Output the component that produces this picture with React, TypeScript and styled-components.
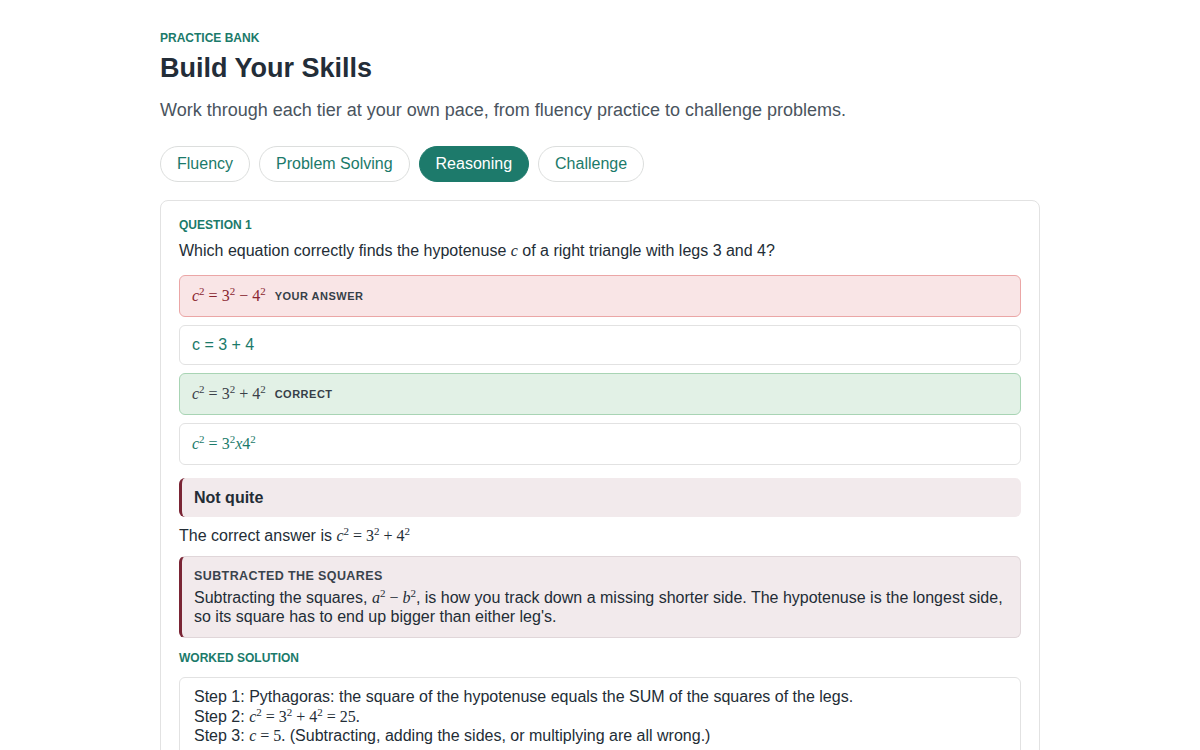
import styled, { createGlobalStyle } from "styled-components";

const GlobalStyle = createGlobalStyle`
  body {
    margin: 0;
    background: #ffffff;
    font-family: "Liberation Sans", Arial, sans-serif;
    color: #232d36;
  }
`;

const teal = "#1b7a6a";

export default function App() {
  const tiers = ["Fluency", "Problem Solving", "Reasoning", "Challenge"];

  return (
    <>
      <GlobalStyle />
      <Page>
        <Eyebrow>Practice Bank</Eyebrow>
        <Title>Build Your Skills</Title>
        <Subtitle>
          Work through each tier at your own pace, from fluency practice to challenge problems.
        </Subtitle>

        <Tabs>
          {tiers.map((t) => (
            <Pill key={t} $active={t === "Reasoning"}>
              {t}
            </Pill>
          ))}
        </Tabs>

        <Card>
          <SectionLabel>Question 1</SectionLabel>
          <Question>
            Which equation correctly finds the hypotenuse <Math><V>c</V></Math> of a right
            triangle with legs 3 and 4?
          </Question>

          <Options>
            <Option $state="wrong">
              <Math>
                <V>c</V><Sup>2</Sup> = 3<Sup>2</Sup> − 4<Sup>2</Sup>
              </Math>
              <Tag>Your answer</Tag>
            </Option>
            <Option>c = 3 + 4</Option>
            <Option $state="correct">
              <Math>
                <V>c</V><Sup>2</Sup> = 3<Sup>2</Sup> + 4<Sup>2</Sup>
              </Math>
              <Tag>Correct</Tag>
            </Option>
            <Option>
              <Math>
                <V>c</V><Sup>2</Sup> = 3<Sup>2</Sup><V>x</V>4<Sup>2</Sup>
              </Math>
            </Option>
          </Options>

          <Verdict>Not quite</Verdict>
          <Answer>
            The correct answer is{" "}
            <Math>
              <V>c</V><Sup>2</Sup> = 3<Sup>2</Sup> + 4<Sup>2</Sup>
            </Math>
          </Answer>

          <Misconception>
            <MisTitle>Subtracted the squares</MisTitle>
            <MisText>
              Subtracting the squares,{" "}
              <Math>
                <V>a</V><Sup>2</Sup> − <V>b</V><Sup>2</Sup>
              </Math>
              , is how you track down a missing shorter side. The hypotenuse is the longest side,
              so its square has to end up bigger than either leg's.
            </MisText>
          </Misconception>

          <SectionLabel $gap={12}>Worked solution</SectionLabel>
          <Solution>
            <div>Step 1: Pythagoras: the square of the hypotenuse equals the SUM of the squares of the legs.</div>
            <div>
              Step 2:{" "}
              <Math>
                <V>c</V><Sup>2</Sup> = 3<Sup>2</Sup> + 4<Sup>2</Sup> = 25.
              </Math>
            </div>
            <div>
              Step 3: <Math><V>c</V> = 5.</Math> (Subtracting, adding the sides, or multiplying are all wrong.)
            </div>
          </Solution>
        </Card>
      </Page>
    </>
  );
}

const Page = styled.main`
  width: 880px;
  margin: 0 auto;
  padding-top: 30px;
  display: flex;
  flex-direction: column;
`;

const Eyebrow = styled.div`
  font-size: 12px;
  line-height: 16px;
  font-weight: 700;
  text-transform: uppercase;
  color: ${teal};
`;

const Title = styled.h1`
  margin: 4px 0 0;
  font-size: 27px;
  line-height: 36px;
  font-weight: 700;
  color: #232d38;
`;

const Subtitle = styled.p`
  margin: 12px 0 0;
  font-size: 18px;
  line-height: 24px;
  color: #4a545e;
`;

const Tabs = styled.nav`
  display: flex;
  gap: 9px;
  margin-top: 24px;
`;

const Pill = styled.button<{ $active?: boolean }>`
  height: 36px;
  padding: 0 16px;
  border-radius: 18px;
  font-family: inherit;
  font-size: 16px;
  border: 1px solid ${(p) => (p.$active ? "#1d7a6b" : "#dcdedd")};
  background: ${(p) => (p.$active ? "#1d7a6b" : "#ffffff")};
  color: ${(p) => (p.$active ? "#ffffff" : teal)};
  cursor: pointer;
`;

const Card = styled.section`
  margin-top: 18px;
  border: 1px solid #e2e2e2;
  border-radius: 8px;
  padding: 16px 18px 20px;
  display: flex;
  flex-direction: column;
`;

const SectionLabel = styled.div<{ $gap?: number }>`
  margin-top: ${(p) => p.$gap ?? 0}px;
  font-size: 12px;
  line-height: 16px;
  font-weight: 700;
  text-transform: uppercase;
  color: ${teal};
`;

const Question = styled.p`
  margin: 7px 0 0;
  font-size: 16px;
  line-height: 22px;
  color: #232d36;
`;

const Options = styled.div`
  margin-top: 13px;
  display: flex;
  flex-direction: column;
  gap: 8px;
`;

type OptionState = "wrong" | "correct" | undefined;

const optionBg = (s: OptionState) =>
  s === "wrong" ? "#f9e5e6" : s === "correct" ? "#e2f1e6" : "#ffffff";
const optionBorder = (s: OptionState) =>
  s === "wrong" ? "#eba6a6" : s === "correct" ? "#a8d4b4" : "#e2e2e2";
const optionColor = (s: OptionState) =>
  s === "wrong" ? "#8a2530" : s === "correct" ? "#3a4048" : teal;

const Math = styled.span`
  font-family: "Liberation Serif", "Times New Roman", serif;
  font-size: 16px;
  white-space: nowrap;
`;

const Option = styled.div<{ $state?: OptionState }>`
  display: flex;
  align-items: center;
  gap: 9px;
  min-height: 40px;
  box-sizing: border-box;
  padding: 9px 12px;
  border-radius: 6px;
  border: 1px solid ${(p) => optionBorder(p.$state)};
  background: ${(p) => optionBg(p.$state)};
  color: ${(p) => optionColor(p.$state)};
  font-size: 16px;
  line-height: 20px;

  & > ${Math} {
    display: inline-block;
    line-height: 22px;
  }
`;

const Tag = styled.span`
  font-size: 11px;
  font-weight: 700;
  letter-spacing: 0.5px;
  text-transform: uppercase;
  color: #363f48;
`;

const V = styled.i`
  font-style: italic;
`;

const Sup = styled.sup`
  font-size: 11px;
  line-height: 0;
  vertical-align: 0.55em;
`;

const Verdict = styled.div`
  margin-top: 13px;
  padding: 9px 12px;
  border-left: 3px solid #7a2535;
  border-radius: 6px;
  background: #f2eaec;
  font-size: 16px;
  line-height: 21px;
  font-weight: 700;
  color: #232d36;
`;

const Answer = styled.p`
  margin: 8px 0 0;
  font-size: 16px;
  line-height: 22px;
`;

const Misconception = styled.div`
  margin-top: 9px;
  padding: 11px 14px 11px 12px;
  border: 1px solid #e0d6d9;
  border-left: 3px solid #7a2535;
  border-radius: 6px;
  background: #f2eaec;
`;

const MisTitle = styled.div`
  font-size: 12.5px;
  line-height: 16px;
  font-weight: 700;
  letter-spacing: 0.4px;
  text-transform: uppercase;
  color: #3a434c;
`;

const MisText = styled.p`
  margin: 4px 0 0;
  font-size: 16px;
  line-height: 19px;
  color: #232d36;
`;

const Solution = styled.div`
  margin-top: 11px;
  padding: 9px 14px 12px;
  border: 1px solid #e2e2e2;
  border-radius: 6px;
  font-size: 16px;
  line-height: 19.5px;
  color: #232d36;
`;
